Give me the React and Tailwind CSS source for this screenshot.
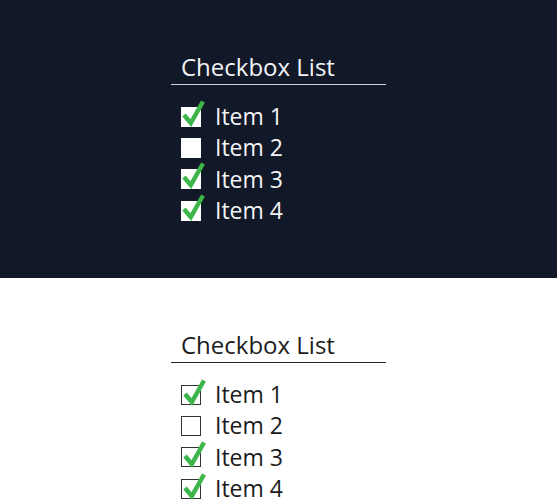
const items = [
  { label: 'Item 1', checked: true },
  { label: 'Item 2', checked: false },
  { label: 'Item 3', checked: true },
  { label: 'Item 4', checked: true },
];

function CheckBox({ checked, dark }) {
  return (
    <span
      className={
        'relative block h-[20px] w-[20px] shrink-0 bg-white ' +
        (dark ? '' : 'border border-[#333]')
      }
    >
      {checked && (
        <svg
          className="absolute left-0 top-0 overflow-visible"
          width="20"
          height="20"
          viewBox="0 0 20 20"
        >
          <path
            d="M3 8 L9.8 16 L22 -5.5"
            fill="none"
            stroke="#3db54a"
            strokeWidth="4.5"
            strokeLinecap="butt"
            strokeLinejoin="miter"
          />
        </svg>
      )}
    </span>
  );
}

function CheckboxList({ dark }) {
  return (
    <section
      className={
        'flex h-[278px] shrink-0 justify-center pt-[52px] ' +
        (dark ? 'bg-[#111827] text-[#f3f4f6]' : 'bg-white text-[#1c1c1c]')
      }
    >
      <div className="w-[215px]">
        <h2
          className={
            'border-b pb-[2px] pl-[10px] text-[24px] font-normal leading-[30px] ' +
            (dark ? 'border-[#cbd5e1]' : 'border-[#222]')
          }
        >
          Checkbox List
        </h2>
        <ul className="mt-[16px] pl-[10px]">
          {items.map((item) => (
            <li key={item.label} className="flex h-[31.3px] items-center gap-[14px] text-[23px] leading-[31.3px]">
              <CheckBox checked={item.checked} dark={dark} />
              <span>{item.label}</span>
            </li>
          ))}
        </ul>
      </div>
    </section>
  );
}

export default function App() {
  return (
    <main
      className="flex h-[500px] flex-col overflow-hidden bg-white"
      style={{ fontFamily: '"Open Sans", "Noto Sans", sans-serif' }}
    >
      <CheckboxList dark />
      <CheckboxList />
    </main>
  );
}
